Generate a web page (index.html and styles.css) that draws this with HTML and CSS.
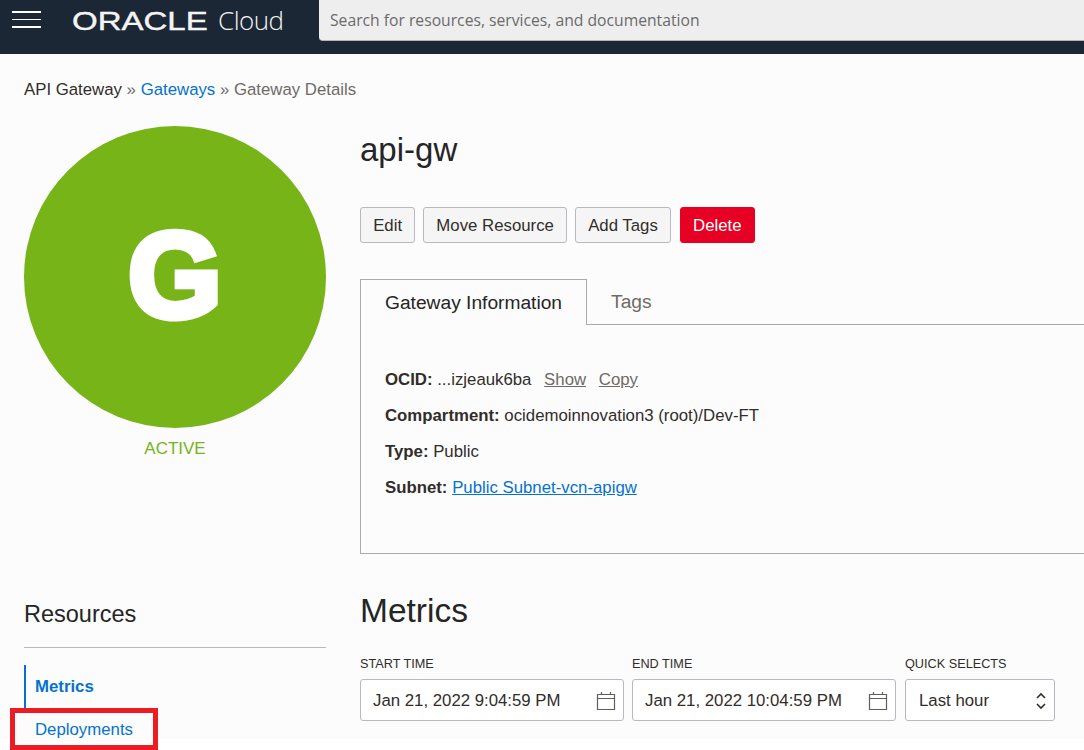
FILE: index.html
```html
<!DOCTYPE html>
<html lang="en">
<head>
    <meta charset="UTF-8">
    <meta name="viewport" content="width=device-width, initial-scale=1.0">
    <title>Gateway Details</title>
    <link rel="stylesheet" href="styles.css">
</head>
<body>

<header class="topbar">
    <button class="menu-btn" aria-label="Menu"><span></span><span></span><span></span></button>
    <div class="brand">
        <span class="brand-word">ORACLE</span>
        <span class="brand-cloud">Cloud</span>
    </div>
    <div class="search">Search for resources, services, and documentation</div>
</header>

<main class="page">
    <nav class="crumbs">
        <span>API Gateway</span> <i>»</i> <a href="#">Gateways</a> <i>»</i> <em>Gateway Details</em>
    </nav>

    <div class="layout">
        <aside class="side">
            <div class="avatar">G</div>
            <div class="status">ACTIVE</div>

            <h2 class="res-title">Resources</h2>
            <ul class="res-nav">
                <li class="current"><a href="#">Metrics</a></li>
                <li><a href="#">Deployments</a></li>
            </ul>
        </aside>

        <section class="content">
            <h1>api-gw</h1>

            <div class="actions">
                <button class="btn">Edit</button>
                <button class="btn">Move Resource</button>
                <button class="btn">Add Tags</button>
                <button class="btn btn-danger">Delete</button>
            </div>

            <div class="tabs">
                <div class="tab active">Gateway Information</div>
                <div class="tab">Tags</div>
            </div>
            <div class="panel">
                <div class="row"><b>OCID:</b> ...izjeauk6ba <a class="muted" href="#">Show</a> <a class="muted" href="#">Copy</a></div>
                <div class="row"><b>Compartment:</b> ocidemoinnovation3 (root)/Dev-FT</div>
                <div class="row"><b>Type:</b> Public</div>
                <div class="row"><b>Subnet:</b> <a href="#">Public Subnet-vcn-apigw</a></div>
            </div>

            <h2 class="metrics-title">Metrics</h2>
            <div class="filters">
                <div class="field field-date">
                    <label>START TIME</label>
                    <div class="input">Jan 21, 2022 9:04:59 PM
                        <svg class="cal" width="20" height="20" viewBox="0 0 20 20"><path d="M1.5 3.5h17v15h-17zM1.5 7.5h17M5.5 1v2.5M14.500 1v2.500" fill="none" stroke="#5f5e5a" stroke-width="1.200"/></svg>
                    </div>
                </div>
                <div class="field field-date">
                    <label>END TIME</label>
                    <div class="input">Jan 21, 2022 10:04:59 PM
                        <svg class="cal" width="20" height="20" viewBox="0 0 20 20"><path d="M1.5 3.5h17v15h-17zM1.5 7.5h17M5.5 1v2.5M14.500 1v2.500" fill="none" stroke="#5f5e5a" stroke-width="1.200"/></svg>
                    </div>
                </div>
                <div class="field field-quick">
                    <label>QUICK SELECTS</label>
                    <div class="input">Last hour
                        <svg width="10" height="20" viewBox="0 0 10 20"><path d="M1 7l4-4 4 4M1 13l4 4 4-4" fill="none" stroke="#312d2a" stroke-width="1.600"/></svg>
                    </div>
                </div>
            </div>
        </section>
    </div>
</main>

<div class="callout"></div>

</body>
</html>
```

FILE: styles.css
```css
html, body {
    height: 100%;
}
body {
    overflow: hidden;
    margin: 0;
    background: #fff;
    color: #312d2a;
    font-family: "Liberation Sans", Arial, sans-serif;
    font-size: 16.8px;
}
a {
    color: #0572ce;
    text-decoration: none;
}

.topbar {
    display: flex;
    height: 54px;
    background: #1c2735;
}
.menu-btn {
    display: flex;
    flex-direction: column;
    gap: 6px;
    width: 29px;
    margin: 11px 0 0 12px;
    padding: 0;
    border: 0;
    background: none;
}
.menu-btn span {
    height: 1.5px;
    background: #fff;
}
.brand {
    display: flex;
    align-items: flex-start;
    width: 247px;
    margin-left: 31px;
    color: #f4f4f4;
}
.brand-word {
    flex: 0 0 103px;
    margin: 5px 43px 0 0;
    font-size: 25px;
    line-height: 32px;
    white-space: nowrap;
    transform: scaleX(1.32);
    transform-origin: left center;
    -webkit-text-stroke: .4px #f4f4f4;
}
.brand-cloud {
    font-size: 26px;
    line-height: 41px;
    font-weight: 300;
    font-family: "Open Sans", sans-serif;
    letter-spacing: -.5px;
}
.search {
    flex: 1;
    height: 40px;
    padding-left: 11px;
    border-bottom: 1px solid #b5b5b5;
    border-bottom-left-radius: 4px;
    background: #eeeeee;
    color: #6b6b6b;
    font-family: "Open Sans", sans-serif;
    font-size: 15.7px;
    line-height: 41px;
}

.page {
    height: 660px;
    padding: 25px 0 0 24px;
    overflow: hidden;
    background: #fcfcfc;
}
.crumbs {
    line-height: 22px;
}
.crumbs i {
    color: #6f6f6f;
    font-style: normal;
}
.crumbs em {
    color: #6f6a66;
    font-style: normal;
}

.layout {
    display: flex;
    gap: 34px;
    margin-top: 25px;
}
.side {
    flex: 0 0 302px;
}
.avatar {
    width: 302px;
    height: 302px;
    border-radius: 50%;
    background: #76b417;
    color: #fff;
    font-size: 120px;
    font-weight: bold;
    line-height: 298px;
    text-align: center;
    -webkit-text-stroke: 7px #fff;
}
.status {
    margin-top: 10px;
    color: #76b417;
    font-size: 17px;
    line-height: 22px;
    text-align: center;
}
.res-title {
    margin: 138px 0 0;
    padding-bottom: 17px;
    border-bottom: 1px solid #b9b9c0;
    font-size: 23.500px;
    font-weight: normal;
    line-height: 32px;
    color: #252525;
}
.res-nav {
    margin: 17px 0 0;
    padding: 0;
    list-style: none;
}
.res-nav li {
    height: 43px;
    padding-left: 9px;
    border-left: 2px solid transparent;
    line-height: 43px;
}
.res-nav .current {
    border-left-color: #0572ce;
    font-weight: bold;
}

.content {
    flex: 1;
    min-width: 0;
}
h1 {
    margin: 0;
    font-size: 33px;
    font-weight: normal;
    line-height: 48px;
    color: #252525;
}
.actions {
    display: flex;
    gap: 8px;
    margin-top: 33px;
}
.btn {
    height: 36px;
    padding: 1px 12.15px 0;
    border: 1px solid #b7b8c0;
    border-radius: 3px;
    background: #f5f5f6;
    color: #312d2a;
    font: inherit;
}
.btn-danger {
    margin-left: 1px;
    border-color: #e60023;
    background: #e60023;
    color: #fff;
}

.tabs {
    display: flex;
    margin-top: 36px;
    height: 46px;
    border-bottom: 1px solid #aaa;
    box-sizing: border-box;
    margin-right: -1px;
    font-size: 19.2px;
}
.tab {
    height: 45px;
    padding: 0 24px;
    color: #6f6a66;
    line-height: 45px;
}
.tab.active {
    height: 46px;
    border: 1px solid #aaa;
    border-bottom: 0;
    background: #fcfcfc;
    color: #252525;
    box-sizing: border-box;
    line-height: 46px;
}
.panel {
    height: 229px;
    padding-top: 37px;
    padding-left: 24px;
    border-left: 1px solid #aaa;
    border-bottom: 1px solid #aaa;
    box-sizing: border-box;
}
.row {
    height: 36px;
    line-height: 36px;
}
.row b {
    color: #312d2a;
}
.row a {
    text-decoration: underline;
}
.row .muted {
    margin-left: 8px;
    color: #6f6a66;
}
.metrics-title {
    margin: 36px 0 0;
    font-size: 33.500px;
    font-weight: normal;
    line-height: 42px;
    color: #252525;
}
.filters {
    display: flex;
    gap: 8px;
    margin-top: 21px;
}
.field label {
    display: block;
    color: #312d2a;
    font-size: 12.700px;
    line-height: 22px;
}
.field-date {
    width: 264px;
}
.field-quick {
    width: 150px;
    margin-left: 1px;
}
.input {
    display: flex;
    align-items: center;
    justify-content: space-between;
    height: 42px;
    margin-top: 4px;
    padding: 2px 7px 0 12px;
    border: 1px solid #b7b8c0;
    border-radius: 3px;
    background: #fff;
    box-sizing: border-box;
}
.field-quick .input {
    padding-left: 13px;
    padding-right: 8px;
}

.callout {
    position: absolute;
    left: 10px;
    top: 708px;
    width: 148px;
    height: 42px;
    border: 5px solid #ed1c24;
    box-sizing: border-box;
}
```
